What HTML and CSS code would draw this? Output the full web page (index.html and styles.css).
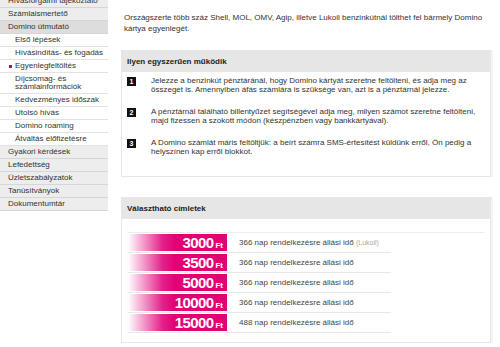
FILE: index.html
```html
<!DOCTYPE html>
<html lang="hu">
<head>
    <meta charset="UTF-8">
    <title>Egyenlegfeltöltés</title>
    <link rel="stylesheet" href="styles.css">
</head>
<body>

<div class="page">
    <ul class="nav">
        <li class="nav-item">Hívásforgalmi tájékoztató</li>
        <li class="nav-item">Számlaismertető</li>
        <li class="nav-item nav-open">Domino útmutató</li>
        <li class="nav-sub">Első lépések</li>
        <li class="nav-sub">Hívásindítás- és fogadás</li>
        <li class="nav-sub nav-current">Egyenlegfeltöltés</li>
        <li class="nav-sub">Díjcsomag- és<br>számlainformációk</li>
        <li class="nav-sub">Kedvezményes időszak</li>
        <li class="nav-sub">Utolsó hívás</li>
        <li class="nav-sub">Domino roaming</li>
        <li class="nav-sub">Átváltás előfizetésre</li>
        <li class="nav-item">Gyakori kérdések</li>
        <li class="nav-item">Lefedettség</li>
        <li class="nav-item">Üzletszabályzatok</li>
        <li class="nav-item">Tanúsítványok</li>
        <li class="nav-item">Dokumentumtár</li>
    </ul>

    <div class="main">
        <p class="intro">Országszerte több száz Shell, MOL, OMV, Agip, illetve Lukoil benzinkútnál tölthet fel bármely Domino kártya egyenlegét.</p>

        <div class="panel">
            <h3 class="panel-title">Ilyen egyszerűen működik</h3>
            <ol class="steps">
                <li>
                    <span class="num">1</span>
                    <p>Jelezze a benzinkút pénztáránál, hogy Domino kártyát szeretne feltölteni, és adja meg az összeget is. Amennyiben áfás számlára is szüksége van, azt is a pénztárnál jelezze.</p>
                </li>
                <li>
                    <span class="num">2</span>
                    <p>A pénztárnál található billentyűzet segítségével adja meg, milyen számot szeretne feltölteni, majd fizessen a szokott módon (készpénzben vagy bankkártyával).</p>
                </li>
                <li>
                    <span class="num">3</span>
                    <p>A Domino számlát máris feltöltjük: a beírt számra SMS-értesítést küldünk erről, Ön pedig a helyszínen kap erről blokkot.</p>
                </li>
            </ol>
        </div>

        <div class="panel">
            <h3 class="panel-title">Választható címletek</h3>
            <div class="prices">
                <div class="price-row">
                    <span class="amount">3000<small>Ft</small></span>
                    <span class="desc">366 nap rendelkezésre állási idő <em>(Lukoil)</em></span>
                </div>
                <div class="price-row">
                    <span class="amount">3500<small>Ft</small></span>
                    <span class="desc">366 nap rendelkezésre állási idő</span>
                </div>
                <div class="price-row">
                    <span class="amount">5000<small>Ft</small></span>
                    <span class="desc">366 nap rendelkezésre állási idő</span>
                </div>
                <div class="price-row">
                    <span class="amount">10000<small>Ft</small></span>
                    <span class="desc">366 nap rendelkezésre állási idő</span>
                </div>
                <div class="price-row">
                    <span class="amount">15000<small>Ft</small></span>
                    <span class="desc">488 nap rendelkezésre állási idő</span>
                </div>
            </div>
        </div>
    </div>
</div>

</body>
</html>
```

FILE: styles.css
```css
* { margin: 0; padding: 0 }
body { font-family: "Liberation Sans", Arial, sans-serif; font-size: 8px; color: #333; background: #fff; }
.page { display: flex; align-items: flex-start; }


/**** sidebar ****/
.nav { width: 108px; margin-top: -5px; list-style: none; flex-shrink: 0; }
.nav li { padding: 2px 0 2px 8px; line-height: 8px; border-bottom: 1px solid #d6d6d6; white-space: nowrap; }
.nav .nav-item { background-color: #ededed; }
.nav .nav-open { background-color: #dddddd; }
.nav .nav-sub { background-color: #fff; padding-left: 15px; border-bottom-color: #e2e2e2; }
.nav .nav-current { position: relative; }
.nav .nav-current::before { content: ''; position: absolute; left: 9px; top: 5px; width: 3px; height: 3px; background-color: #c0006a; }


/**** content ****/
.main { width: 370px; margin-left: 13px; }
.intro { margin: 12px 4px 0 3px; line-height: 11px; }

.panel { margin-top: 16px; border: 1px solid #e6e6e6; box-shadow: 2px 0 0 #f4f4f4; }
.panel + .panel { margin-top: 20px; }
.panel-title { background-color: #e6e6e6; font-size: 8px; font-weight: 700; color: #222; line-height: 21px; padding: 0 5px; }


/**** steps ****/
.steps { list-style: none; padding: 4px 14px 20px 5px; }
.steps li { display: flex; align-items: flex-start; }
.steps li + li { margin-top: 13px; }
.steps .num { flex-shrink: 0; width: 9px; height: 9px; margin: 1px 15px 0 0; background-color: #111; color: #fff; font-weight: 700; font-size: 7px; line-height: 9px; text-align: center; }
.steps p { line-height: 9px; }


/**** prices ****/
.prices { margin: 13px 6px 9px; border-top: 1px solid #ececec; }
.price-row { display: flex; align-items: center; width: 263px; padding: 1px 0; border-bottom: 1px solid #e8e8e8; }
.amount { flex-shrink: 0; width: 95px; height: 17px; padding-right: 4px; text-align: right; color: #fff; font-size: 15px; font-weight: 700; line-height: 17px; letter-spacing: -0.6px; background: linear-gradient(to right, #fff 0%, #e4208a 35%, #e20074 48%); }
.amount small { font-size: 8px; letter-spacing: 0; margin-left: 2px; }
.desc { margin-left: 12px; color: #444; }
.desc em { font-style: normal; font-size: 7px; color: #aaa; }
```
